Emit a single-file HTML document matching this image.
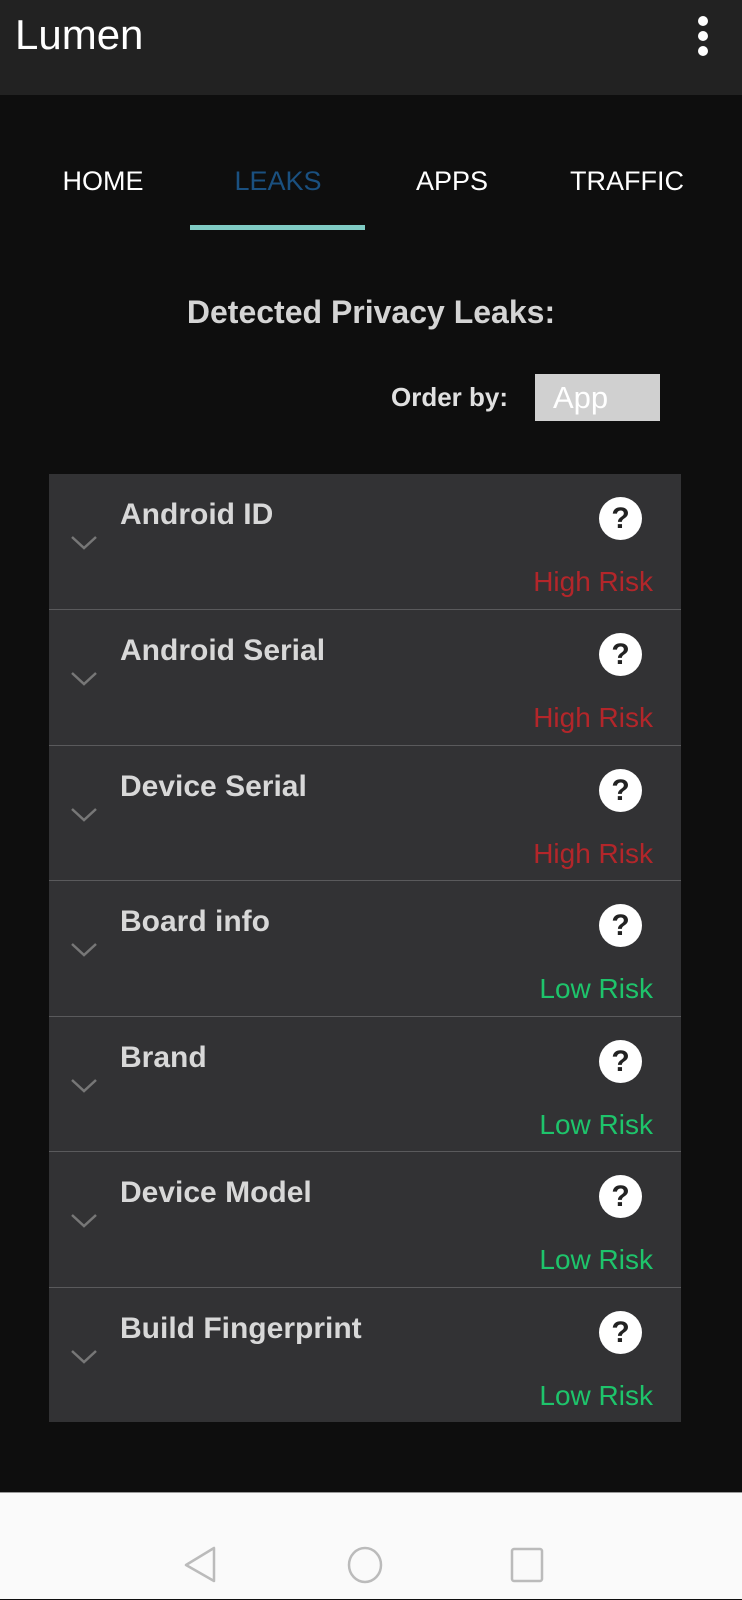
<!DOCTYPE html>
<html><head><meta charset="utf-8"><style>
*{margin:0;padding:0;box-sizing:border-box}
body{width:742px;height:1599px;background:#0e0e0e;font-family:"Liberation Sans",sans-serif;position:relative;overflow:hidden}
.top{position:absolute;left:0;top:0;width:742px;height:95px;background:#222}
.t{position:absolute;white-space:nowrap}
.tab{position:absolute;top:166px;font-size:27px;color:#fff;transform:translateX(-50%);letter-spacing:0px}
.card{position:absolute;left:49px;top:474px;width:632px;height:948px;background:#323234}
.row{position:absolute;left:0;width:632px;height:136px;border-top:1px solid #5a5a5c}
.row:first-child{border-top:none}
.name{position:absolute;left:71px;top:24px;font-size:30px;font-weight:bold;color:#d8d8d8}
.q{position:absolute;left:550px;top:23px;width:43px;height:43px;border-radius:50%;background:#fff;color:#222;font-weight:bold;font-size:30px;text-align:center;line-height:43px}
.risk{position:absolute;right:28px;top:92px;font-size:28px}
.hi{color:#b3262a}.lo{color:#1ec46b}
.chev{position:absolute;left:22px;top:61px}
.nav{position:absolute;left:0;top:1492px;width:742px;height:107px;background:#fafafa;border-top:1px solid #999}
</style></head><body>
<div class="top"></div>
<div class="t" style="left:15px;top:11px;font-size:42px;color:#fff">Lumen</div>
<div style="position:absolute;left:698px;top:16px;width:10px;height:10px;border-radius:50%;background:#fff"></div>
<div style="position:absolute;left:698px;top:31px;width:10px;height:10px;border-radius:50%;background:#fff"></div>
<div style="position:absolute;left:698px;top:46px;width:10px;height:10px;border-radius:50%;background:#fff"></div>

<div class="tab" style="left:103px">HOME</div>
<div class="tab" style="left:278px;color:#1a5080">LEAKS</div>
<div class="tab" style="left:452px">APPS</div>
<div class="tab" style="left:627px">TRAFFIC</div>
<div style="position:absolute;left:190px;top:225px;width:175px;height:5px;background:#7fcbc4"></div>

<div class="t" style="left:0;width:742px;text-align:center;top:294px;font-size:32px;font-weight:bold;color:#d4d4d4">Detected Privacy Leaks:</div>
<div class="t" style="left:391px;top:382px;font-size:26px;font-weight:bold;color:#e0e0e0">Order by:</div>
<div style="position:absolute;left:535px;top:374px;width:125px;height:47px;background:#d0d0d0"></div>
<div class="t" style="left:553px;top:380px;font-size:31px;color:#fff">App</div>

<div class="card">
<div class="row" style="top:0"><svg class="chev" width="26" height="16"><path d="M1 2L13 13L25 2" stroke="#777" stroke-width="2.5" fill="none"/></svg><div class="name">Android ID</div><div class="q">?</div><div class="risk hi">High Risk</div></div>
<div class="row" style="top:135px"><svg class="chev" width="26" height="16"><path d="M1 2L13 13L25 2" stroke="#777" stroke-width="2.5" fill="none"/></svg><div class="name">Android Serial</div><div class="q">?</div><div class="risk hi">High Risk</div></div>
<div class="row" style="top:271px"><svg class="chev" width="26" height="16"><path d="M1 2L13 13L25 2" stroke="#777" stroke-width="2.5" fill="none"/></svg><div class="name">Device Serial</div><div class="q">?</div><div class="risk hi">High Risk</div></div>
<div class="row" style="top:406px"><svg class="chev" width="26" height="16"><path d="M1 2L13 13L25 2" stroke="#777" stroke-width="2.5" fill="none"/></svg><div class="name">Board info</div><div class="q">?</div><div class="risk lo">Low Risk</div></div>
<div class="row" style="top:542px"><svg class="chev" width="26" height="16"><path d="M1 2L13 13L25 2" stroke="#777" stroke-width="2.5" fill="none"/></svg><div class="name">Brand</div><div class="q">?</div><div class="risk lo">Low Risk</div></div>
<div class="row" style="top:677px"><svg class="chev" width="26" height="16"><path d="M1 2L13 13L25 2" stroke="#777" stroke-width="2.5" fill="none"/></svg><div class="name">Device Model</div><div class="q">?</div><div class="risk lo">Low Risk</div></div>
<div class="row" style="top:813px"><svg class="chev" width="26" height="16"><path d="M1 2L13 13L25 2" stroke="#777" stroke-width="2.5" fill="none"/></svg><div class="name">Build Fingerprint</div><div class="q">?</div><div class="risk lo">Low Risk</div></div>
</div>

<div class="nav">
<svg width="742" height="107" style="position:absolute;left:0;top:0">
<path d="M214 55L214 88L186 72Z" stroke="#bbb" stroke-width="2.5" fill="none" stroke-linejoin="round"/>
<ellipse cx="365" cy="72" rx="16" ry="17" stroke="#bbb" stroke-width="2.5" fill="none"/>
<rect x="512" y="56" width="30" height="32" rx="2" stroke="#bbb" stroke-width="2.5" fill="none"/>
</svg>
</div>
</body></html>
